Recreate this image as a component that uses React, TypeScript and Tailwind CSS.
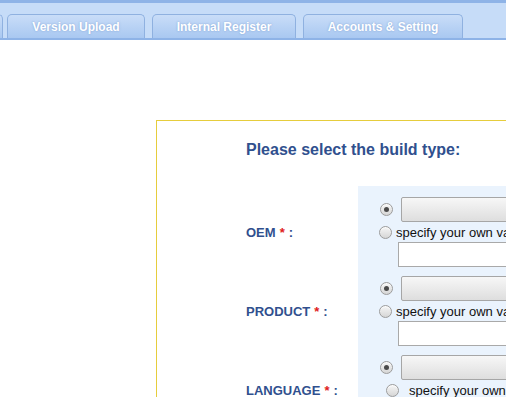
import React from "react";

const tabs = [
  { label: "", width: "w-[20px] -ml-[17px]" },
  { label: "Version Upload", width: "w-[138px] ml-[4px]" },
  { label: "Internal Register", width: "w-[144px] ml-[7px]" },
  { label: "Accounts & Setting", width: "w-[160px] ml-[7px]" },
];

function Radio({ checked }: { checked?: boolean }) {
  return (
    <span className="flex h-[13px] w-[13px] shrink-0 items-center justify-center rounded-full border border-[#9c9c9c] bg-gradient-to-b from-[#f6f6f6] to-[#d6d6d6] shadow-[inset_0_1px_1px_rgba(255,255,255,0.8)]">
      {checked && <span className="h-[5px] w-[5px] rounded-full bg-[#4a4a4a]" />}
    </span>
  );
}

function FieldRow({ shifted }: { shifted?: boolean }) {
  return (
    <div className="flex h-[79px] flex-col pt-[4px]">
      <div className="flex items-center">
        <span className="ml-[22px]">
          <Radio checked />
        </span>
        <div className="ml-[8px] h-[25px] w-[200px] rounded-[2px] border border-[#a6a6a6] bg-gradient-to-b from-[#f7f7f7] to-[#dedede]" />
      </div>
      <div className={"flex h-[20px] items-center " + (shifted ? "ml-[28px]" : "ml-[21px]")}>
        <Radio />
        <span className={"whitespace-nowrap text-[13px] leading-none text-[#111] " + (shifted ? "ml-[10px]" : "ml-[4px]")}>
          specify your own value
        </span>
      </div>
      {!shifted && (
        <div className="ml-[40px] h-[25px] w-[200px] border border-[#a9a9a9] bg-white" />
      )}
    </div>
  );
}

export default function App() {
  const labels = ["OEM", "PRODUCT", "LANGUAGE"];
  return (
    <div
      className="h-[397px] w-[506px] overflow-hidden bg-white"
      style={{ fontFamily: '"Liberation Sans", Arial, sans-serif' }}
    >
      {/* top tab band */}
      <div className="flex h-[40px] items-end overflow-hidden border-t-[3px] border-b-2 border-[#8eb3e7] bg-[#c6dcf8]">
        {tabs.map((t, i) => (
          <div
            key={i}
            className={
              "flex h-[24px] shrink-0 items-center justify-center rounded-t-[5px] border border-b-0 border-[#8fb1e0] bg-gradient-to-b from-[#c9ddf8] to-[#a9c8f1] text-[12px] font-bold text-white [text-shadow:0_0_2px_rgba(90,130,190,0.6)] " +
              t.width
            }
          >
            {t.label}
          </div>
        ))}
      </div>

      {/* build type box */}
      <div className="ml-[156px] mt-[80px] w-[420px] border border-[#e6cd3d] pb-[40px]">
        <h2 className="pl-[89px] pt-[19px] text-[16px] font-bold leading-[20px] text-[#30508e]">
          Please select the build type:
        </h2>
        <div className="mt-[26px] flex">
          <div className="ml-[89px] w-[112px] shrink-0 pt-[7px]">
            {labels.map((l) => (
              <div key={l} className="flex h-[79px] items-center text-[13px] font-bold text-[#30508e]">
                {l}
                <span className="ml-[4px] text-[#e02020]">*</span>
                <span className="ml-[4px]">:</span>
              </div>
            ))}
          </div>
          <div className="flex-1 bg-[#eaf3fd] pt-[7px]">
            <FieldRow />
            <FieldRow />
            <FieldRow shifted />
          </div>
        </div>
      </div>
    </div>
  );
}
